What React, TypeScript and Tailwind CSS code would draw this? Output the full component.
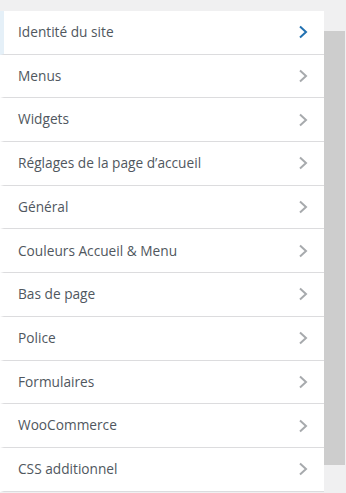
import React from "react";

const items = [
  "Identité du site",
  "Menus",
  "Widgets",
  "Réglages de la page d’accueil",
  "Général",
  "Couleurs Accueil & Menu",
  "Bas de page",
  "Police",
  "Formulaires",
  "WooCommerce",
  "CSS additionnel",
];

function Chevron({ active }: { active: boolean }) {
  return (
    <svg width="10" height="14" viewBox="0 0 10 14" fill="none">
      <polyline
        points="2,1.5 8,7 2,12.5"
        stroke={active ? "#2271b1" : "#a7aaad"}
        strokeWidth="2"
        strokeLinecap="butt"
        strokeLinejoin="miter"
      />
    </svg>
  );
}

export default function App() {
  return (
    <div
      className="flex h-[493px] w-[346px] items-start overflow-hidden bg-[#f0f0f1]"
      style={{ fontFamily: '"Open Sans", "Noto Sans", sans-serif' }}
    >
      <div className="w-[324px] shrink-0 pt-[11px]">
        <ul className="bg-white">
          {items.map((label, i) => (
            <li
              key={label}
              className={`flex h-[43.7px] items-center justify-between border-b border-b-[#dcdcde] border-l-4 pl-[14px] pr-[16px] text-[13.7px] text-[#50575e] ${
                i === 0 ? "border-l-[#e5f0f8]" : "border-l-white"
              }`}
            >
              <span>{label}</span>
              <Chevron active={i === 0} />
            </li>
          ))}
        </ul>
      </div>
      <div className="flex-1 pt-[31px]">
        <div className="h-[434px] w-[21px] bg-[#cdcdcd]" />
      </div>
    </div>
  );
}
